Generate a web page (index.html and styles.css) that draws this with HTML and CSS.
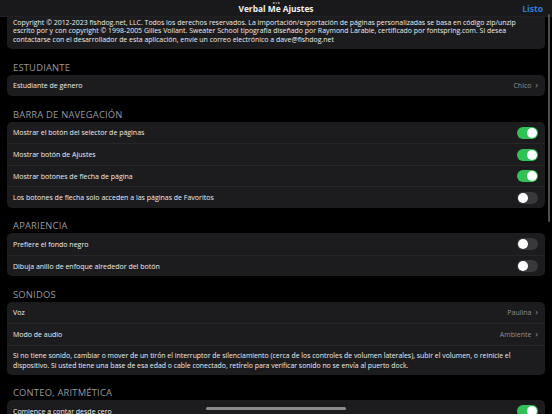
FILE: index.html
```html
<!DOCTYPE html>
<html lang="es">

<head>
    <meta charset="UTF-8">
    <title>Verbal Me Ajustes</title>
    <link rel="stylesheet" href="styles.css">
</head>

<body>
    <div class="navbar">
        <div class="dots"><span></span><span></span><span></span></div>
        <div class="nav-title">Verbal Me Ajustes</div>
        <div class="nav-done">Listo</div>
    </div>

    <div class="content">
        <div class="card card-top">
            <div class="para">
                Copyright © 2012-2023 fishdog.net, LLC. Todos los derechos reservados. La importación/exportación de páginas personalizadas se basa en código zip/unzip<br>
                escrito por y con copyright © 1998-2005 Gilles Vollant. Sweater School tipografía diseñado por Raymond Larabie, certificado por fontspring.com. Si desea<br>
                contactarse con el desarrollador de esta aplicación, envíe un correo electrónico a dave@fishdog.net
            </div>
        </div>

        <div class="section-title">ESTUDIANTE</div>
        <div class="card">
            <div class="row">
                <span class="label">Estudiante de género</span>
                <span class="value">Chico <span class="chev">›</span></span>
            </div>
        </div>

        <div class="section-title">BARRA DE NAVEGACIÓN</div>
        <div class="card">
            <div class="row">
                <span class="label">Mostrar el botón del selector de páginas</span>
                <span class="switch on"></span>
            </div>
            <div class="row">
                <span class="label">Mostrar botón de Ajustes</span>
                <span class="switch on"></span>
            </div>
            <div class="row">
                <span class="label">Mostrar botones de flecha de página</span>
                <span class="switch on"></span>
            </div>
            <div class="row">
                <span class="label">Los botones de flecha solo acceden a las páginas de Favoritos</span>
                <span class="switch"></span>
            </div>
        </div>

        <div class="section-title">APARIENCIA</div>
        <div class="card">
            <div class="row">
                <span class="label">Prefiere el fondo negro</span>
                <span class="switch"></span>
            </div>
            <div class="row">
                <span class="label">Dibuja anillo de enfoque alrededor del botón</span>
                <span class="switch"></span>
            </div>
        </div>

        <div class="section-title">SONIDOS</div>
        <div class="card">
            <div class="row">
                <span class="label">Voz</span>
                <span class="value">Paulina <span class="chev">›</span></span>
            </div>
            <div class="row">
                <span class="label">Modo de audio</span>
                <span class="value">Ambiente <span class="chev">›</span></span>
            </div>
            <div class="row note">
                Si no tiene sonido, cambiar o mover de un tirón el interruptor de silenciamiento (cerca de los controles de volumen laterales), subir el volumen, o reinicie el<br>
                dispositivo. Si usted tiene una base de esa edad o cable conectado, retírelo para verificar sonido no se envía al puerto dock.
            </div>
        </div>

        <div class="section-title">CONTEO, ARITMÉTICA</div>
        <div class="card">
            <div class="row">
                <span class="label">Comience a contar desde cero</span>
                <span class="switch on"></span>
            </div>
        </div>
    </div>

    <div class="scroll-indicator"></div>
    <div class="home-indicator"></div>
</body>

</html>
```

FILE: styles.css
```css
body {
    margin: 0;
    width: 552px;
    height: 414px;
    overflow: hidden;
    background: #000;
    color: #ededef;
    font-family: "Open Sans", Lato, sans-serif;
    position: relative;
}

.navbar {
    height: 17px;
    background: #19191b;
    border-bottom: 1px solid #202022;
    box-sizing: border-box;
    display: flex;
    align-items: center;
    justify-content: center;
    position: relative;
}

.nav-title {
    font-size: 8.4px;
    font-weight: bold;
    color: #f2f2f2;
    padding-top: 1px;
}

.nav-done {
    position: absolute;
    right: 9px;
    top: 3px;
    font-size: 8.6px;
    font-weight: bold;
    color: #2d7fd6;
}

.dots {
    position: absolute;
    top: 2px;
    left: 50%;
    transform: translateX(-50%);
    display: flex;
    gap: 1px;
}

.dots span {
    width: 1.5px;
    height: 1.5px;
    border-radius: 50%;
    background: #9a9a9a;
}

.content {
    padding: 0 7px;
}

.card {
    background: #1c1c1e;
    border-radius: 5px;
    overflow: hidden;
}

.card-top {
    border-radius: 0 0 5px 5px;
}

.para {
    font-size: 6.95px;
    line-height: 8.5px;
    padding: 1.5px 6px 5px;
    white-space: nowrap;
}

.section-title {
    font-family: "Open Sans", sans-serif;
    font-size: 9.4px;
    line-height: 12px;
    color: #9a9a9e;
    padding: 12.5px 6px 1px;
    letter-spacing: 0.2px;
}

.row {
    height: 21.5px;
    display: flex;
    align-items: center;
    justify-content: space-between;
    padding: 1px 7px 0 6px;
    font-size: 7px;
    border-top: 1px solid #262628;
    box-sizing: border-box;
}

.row:first-child {
    border-top: none;
}

.row.note {
    height: auto;
    display: block;
    font-size: 6.9px;
    line-height: 10px;
    padding-top: 5px;
    padding-bottom: 4px;
    white-space: nowrap;
}

.value {
    color: #8d8d92;
}

.chev {
    display: inline-block;
    margin-left: 2px;
    font-size: 9px;
    line-height: 7px;
}

.switch {
    width: 21px;
    height: 12px;
    border-radius: 6px;
    background: #39393d;
    position: relative;
}

.switch::after {
    content: '';
    position: absolute;
    top: 1px;
    left: 1px;
    width: 10px;
    height: 10px;
    border-radius: 50%;
    background: #fff;
}

.switch.on {
    background: #30c254;
}

.switch.on::after {
    left: 10px;
}

.scroll-indicator {
    position: absolute;
    right: 2px;
    top: 14px;
    width: 2.5px;
    height: 208px;
    border-radius: 2px;
    background: #4e4e52;
}

.home-indicator {
    position: absolute;
    left: 206px;
    bottom: 4px;
    width: 140px;
    height: 3px;
    border-radius: 2px;
    background: #8a8a8e;
}
```
